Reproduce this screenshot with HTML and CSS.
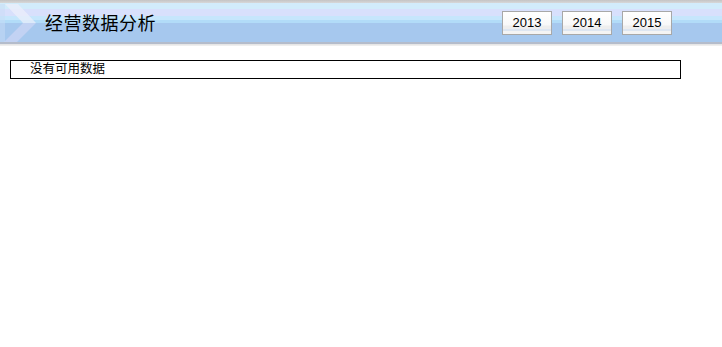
FILE: index.html
```html
<!doctype html>
<html lang="zh-CN">
<head>
  <meta charset="UTF-8">
  <title>经营数据分析</title>
  <link rel="stylesheet" href="styles.css">
</head>
<body>
  <div class="header">
    <svg class="deco" width="40" height="46" viewBox="0 0 40 46">
      <polygon points="5,4 18,4 36,23 23,23" fill="#eef0fb" opacity="0.7"/>
      <polygon points="23,23 36,23 17,42 4,42" fill="#d6d8f6" opacity="0.6"/>
      <polygon points="0,4 5,4 5,42 0,42" fill="#c8dcf6" opacity="0.5"/>
    </svg>
    <h1 class="title">经营数据分析</h1>
    <div class="years">
      <button class="year">2013</button>
      <button class="year">2014</button>
      <button class="year">2015</button>
    </div>
  </div>

  <div class="content">
    <div class="empty">没有可用数据</div>
  </div>
</body>
</html>
```

FILE: styles.css
```css
body {
  margin: 0;
  background-color: #fff;
  font-family: "Liberation Sans", "Noto Sans CJK SC", sans-serif;
  color: #000;
}

.header {
  position: relative;
  height: 46px;
  display: flex;
  align-items: center;
  background: linear-gradient(to bottom,
    #c4c4c4 0, #d8d8d8 3px,
    #d2ecfb 3px, #d2ecfb 9px,
    #d8e0fc 9px, #d8e0fc 16px,
    #c6e6fc 16px, #c6e6fc 20px,
    #b2dcf8 20px, #b2dcf8 23px,
    #a6c8ee 23px, #a6c8ee 42px,
    #b4bccb 42px, #b4bccb 44px,
    #e2e2e2 44px, #f2f2f2 46px);
}

.deco {
  position: absolute;
  left: 0;
  top: 0;
}

.title {
  margin: 0 0 2px 45px;
  font-size: 18px;
  font-weight: normal;
  letter-spacing: 0.5px;
}

.years {
  display: flex;
  gap: 10px;
  margin-left: auto;
  margin-right: 50px;
  margin-bottom: 1px;
}

.year {
  width: 50px;
  height: 24px;
  padding: 0;
  border: 1px solid #a8a8a8;
  background: linear-gradient(to bottom, #fff 0, #f8f8f8 13px, #eeeeee 14px, #eeeeee 17px, #dde6f2 17px, #dde6f2 19px, #f4f4f4 19px);
  font-family: "Liberation Sans", sans-serif;
  font-size: 13px;
  color: #000;
}

.content {
  padding: 14px 40px 0 10px;
}

.empty {
  width: 650px;
  height: 17px;
  border: 1px solid #000;
  padding-left: 19px;
  font-size: 12.5px;
  line-height: 17px;
}
```
